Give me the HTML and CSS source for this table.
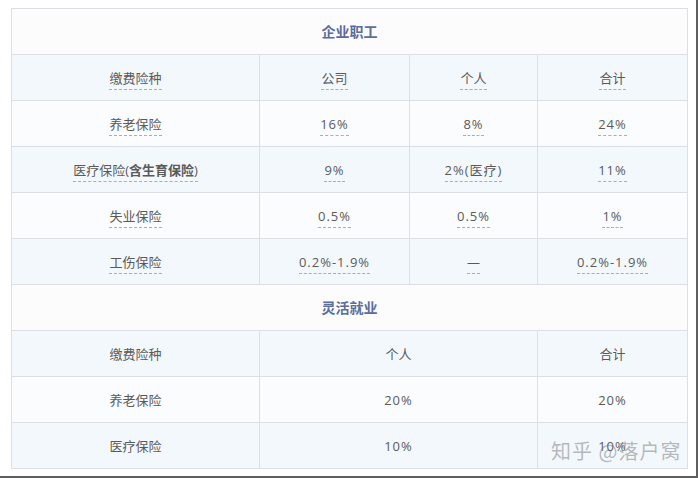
FILE: index.html
```html
<!DOCTYPE html>
<html lang="zh">
<head>
<meta charset="utf-8">
<link rel="stylesheet" href="styles.css">
</head>
<body>
<div class="frame">
  <table class="tbl">
    <colgroup>
      <col class="c1"><col class="c2"><col class="c3"><col class="c4">
    </colgroup>
    <tr class="sec"><td colspan="4">企业职工</td></tr>
    <tr class="blue"><td><span class="u">缴费险种</span></td><td><span class="u">公司</span></td><td><span class="u">个人</span></td><td><span class="u">合计</span></td></tr>
    <tr class="white"><td><span class="u">养老保险</span></td><td><span class="u num">16%</span></td><td><span class="u num">8%</span></td><td><span class="u num">24%</span></td></tr>
    <tr class="blue"><td><span class="u">医疗保险(<b>含生育保险</b>)</span></td><td><span class="u num">9%</span></td><td><span class="u num">2%(医疗)</span></td><td><span class="u num">11%</span></td></tr>
    <tr class="white"><td><span class="u">失业保险</span></td><td><span class="u num">0.5%</span></td><td><span class="u num">0.5%</span></td><td><span class="u num">1%</span></td></tr>
    <tr class="blue"><td><span class="u">工伤保险</span></td><td><span class="u num">0.2%-1.9%</span></td><td><span class="u">—</span></td><td><span class="u num">0.2%-1.9%</span></td></tr>
    <tr class="sec"><td colspan="4">灵活就业</td></tr>
    <tr class="blue"><td>缴费险种</td><td colspan="2">个人</td><td>合计</td></tr>
    <tr class="white"><td>养老保险</td><td colspan="2"><span class="num">20%</span></td><td><span class="num">20%</span></td></tr>
    <tr class="blue"><td>医疗保险</td><td colspan="2"><span class="num">10%</span></td><td><span class="num">10%</span></td></tr>
  </table>
  <div class="wm">知乎 @落户窝</div>
</div>
</body>
</html>
```
FILE: styles.css
```css
html, body {
  margin: 0;
  padding: 0;
  background: #ffffff;
}
.frame {
  position: relative;
  box-sizing: border-box;
  width: 698px;
  height: 478px;
  border-right: 2px solid #5f5f5f;
  border-bottom: 2px solid #5f5f5f;
  padding: 8px 0 0 11px;
  font-family: "Open Sans", "Noto Sans CJK SC", sans-serif;
}
.tbl {
  border-collapse: collapse;
  table-layout: fixed;
  width: 677px;
  font-size: 13px;
  color: #5a5a5a;
}
.c1 { width: 248px; }
.c2 { width: 150px; }
.c3 { width: 128px; }
.c4 { width: 150px; }
.tbl td {
  border: 1px solid #dcdfe4;
  height: 45px;
  padding: 0;
  text-align: center;
  vertical-align: middle;
  line-height: 20px;
}
.sec td {
  background: #fcfcfd;
  color: #5a6e9c;
  font-weight: bold;
  font-size: 14px;
}
.blue td { background: #f3f8fd; }
.white td { background: #fbfcfd; }
.num { letter-spacing: 1px; }
.u {
  padding-bottom: 2px;
  border-bottom: 1px dashed #7fc4b0;
}
.u b { font-weight: bold; }
.wm {
  position: absolute;
  left: 551px;
  top: 436px;
  font-family: "Noto Sans CJK SC", sans-serif;
  font-size: 20px;
  color: rgba(120, 120, 120, 0.5);
  letter-spacing: 1px;
}
```
